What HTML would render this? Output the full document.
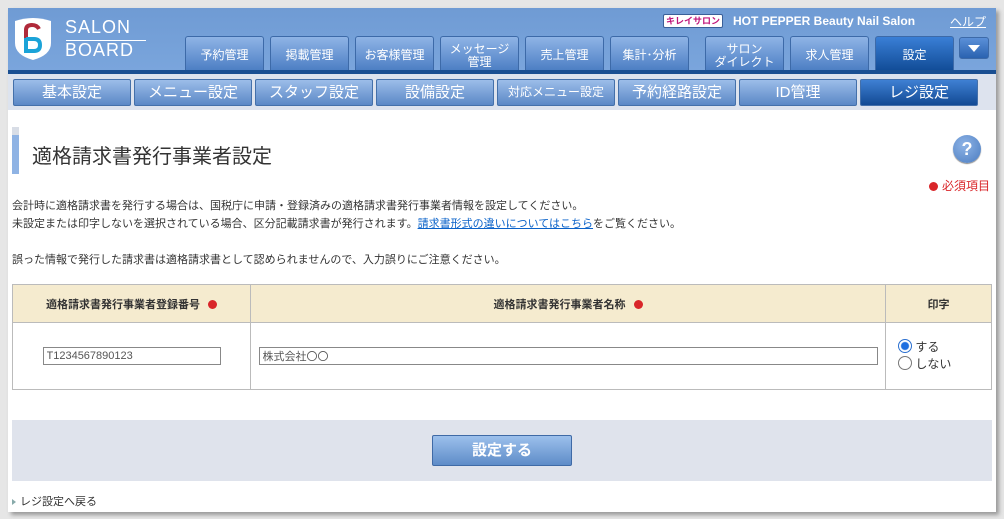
<!DOCTYPE html>
<html><head><meta charset="utf-8"><style>
*{box-sizing:border-box;margin:0;padding:0}
body{width:1004px;height:519px;background:#e6e6e6;font-family:"Liberation Sans","Noto Sans CJK JP",sans-serif;position:relative;overflow:hidden}
#win{position:absolute;left:8px;top:8px;width:988px;height:504px;background:#fff;box-shadow:3px 3px 4px #999}
#hdr{position:absolute;left:0;top:0;width:988px;height:62px;background:linear-gradient(#6f9bd4,#7aa5dc)}
#line{position:absolute;left:0;top:62px;width:988px;height:4px;background:#1a4f92}
#sub{position:absolute;left:0;top:66px;width:988px;height:36px;background:#dde3ee}
.tab{position:absolute;top:28px;height:34px;width:79px;border:1px solid #3d6aa8;border-bottom:none;border-radius:3px 3px 0 0;background:linear-gradient(#8fb4e6,#4d7fc4);color:#fff;font-size:12px;text-align:center;line-height:13px;display:flex;align-items:center;justify-content:center;padding-top:4px}
.tab.act{background:linear-gradient(#3a7fd6,#124d98)}
.sb{position:absolute;top:5px;height:27px;width:118px;border:1px solid #4470aa;border-radius:2px;background:linear-gradient(#9cbde9,#5b88c6);color:#fff;font-size:15px;text-align:center;line-height:25px}
.sb.act{background:linear-gradient(#3f80d3,#124a94)}
p.t{position:absolute;left:4px;font-size:11px;color:#333;white-space:nowrap}
table{position:absolute;left:4px;top:276px;width:980px;border-collapse:collapse}
td,th{border:1px solid #bbb;font-size:11px;color:#333}
th{background:#f5ebcf;height:38px}
.dot{display:inline-block;width:9px;height:9px;border-radius:50%;background:#d9262a;margin-left:8px;vertical-align:-1px}
input{font-family:inherit;font-size:11px;color:#555;border:1px solid #888;height:18px;padding:0 3px}
</style></head><body>
<div id="win">
<div id="hdr">
 <svg style="position:absolute;left:4px;top:9px" width="42" height="44" viewBox="0 0 42 44"><path d="M3 4 Q21 -2 39 4 L39 26 Q39 38 21 43 Q3 38 3 26Z" fill="#fff"/><path d="M27 12 Q25 8 20 8 Q14 8 14 13 L14 21" stroke="#b02a3a" stroke-width="4" fill="none"/><path d="M14 21 L14 34 L22 34 Q28 34 28 28 Q28 22 22 22 L14 22" stroke="#1ba3d8" stroke-width="4" fill="none"/></svg>
 <div style="position:absolute;left:57px;top:10px;color:#fff;font-size:18px;letter-spacing:1px;line-height:19px">SALON</div>
 <div style="position:absolute;left:58px;top:32px;width:80px;height:1px;background:#fff"></div>
 <div style="position:absolute;left:57px;top:33px;color:#fff;font-size:18px;letter-spacing:1px;line-height:19px">BOARD</div>
 <div style="position:absolute;left:655px;top:6px;width:60px;height:14px;background:#fff;border:1px solid #3a5f98;border-radius:2px;color:#c0157a;font-size:9px;font-weight:bold;text-align:center;line-height:12px">キレイサロン</div>
 <div style="position:absolute;left:725px;top:6px;color:#fff;font-size:12px;font-weight:bold">HOT PEPPER Beauty Nail Salon</div>
 <div style="position:absolute;left:942px;top:5px;color:#fff;font-size:12px;text-decoration:underline">ヘルプ</div>
 <div class="tab" style="left:177px">予約管理</div>
 <div class="tab" style="left:262px">掲載管理</div>
 <div class="tab" style="left:347px">お客様管理</div>
 <div class="tab" style="left:432px">メッセージ<br>管理</div>
 <div class="tab" style="left:517px">売上管理</div>
 <div class="tab" style="left:602px">集計･分析</div>
 <div class="tab" style="left:697px">サロン<br>ダイレクト</div>
 <div class="tab" style="left:782px">求人管理</div>
 <div class="tab act" style="left:867px">設定</div>
 <div style="position:absolute;left:951px;top:29px;width:30px;height:22px;border:1px solid #3d6aa8;border-radius:3px;background:linear-gradient(#5b90d8,#2a62b0)"><div style="margin:7px auto 0;width:0;height:0;border-left:6px solid transparent;border-right:6px solid transparent;border-top:7px solid #fff"></div></div>
</div>
<div id="line"></div>
<div id="sub">
 <div class="sb" style="left:5px">基本設定</div>
 <div class="sb" style="left:126px">メニュー設定</div>
 <div class="sb" style="left:247px">スタッフ設定</div>
 <div class="sb" style="left:368px">設備設定</div>
 <div class="sb" style="left:489px;font-size:12px">対応メニュー設定</div>
 <div class="sb" style="left:610px">予約経路設定</div>
 <div class="sb" style="left:731px">ID管理</div>
 <div class="sb act" style="left:852px">レジ設定</div>
</div>
<div style="position:absolute;left:4px;top:119px;width:7px;height:8px;background:#d8dde6"></div>
<div style="position:absolute;left:4px;top:127px;width:7px;height:39px;background:#8fb3e4"></div>
<div style="position:absolute;left:24px;top:132px;font-size:20px;color:#333">適格請求書発行事業者設定</div>
<div style="position:absolute;left:945px;top:127px;width:28px;height:28px;border-radius:50%;background:radial-gradient(circle at 40% 35%,#8db3e6,#4b7cc0);color:#fff;font-weight:bold;font-size:18px;text-align:center;line-height:28px;box-shadow:0 1px 1px #888">?</div>
<div style="position:absolute;left:921px;top:169px;font-size:12px;color:#d9262a"><span class="dot" style="margin:0 4px 0 0"></span>必須項目</div>
<p class="t" style="top:189px">会計時に適格請求書を発行する場合は、国税庁に申請・登録済みの適格請求書発行事業者情報を設定してください。</p>
<p class="t" style="top:207px">未設定または印字しないを選択されている場合、区分記載請求書が発行されます。<span style="color:#0a62c9;text-decoration:underline">請求書形式の違いについてはこちら</span>をご覧ください。</p>
<p class="t" style="top:243px">誤った情報で発行した請求書は適格請求書として認められませんので、入力誤りにご注意ください。</p>
<table>
<tr><th style="width:238px">適格請求書発行事業者登録番号<span class="dot"></span></th><th>適格請求書発行事業者名称<span class="dot"></span></th><th style="width:106px">印字</th></tr>
<tr style="height:67px"><td style="text-align:center"><input style="width:178px" value="T1234567890123"></td><td style="text-align:center"><input style="width:619px" value="株式会社〇〇"></td>
<td style="padding-left:12px;font-size:12px;line-height:17px"><div><span style="display:inline-block;width:14px;height:14px;border-radius:50%;border:1px solid #2a6fd0;vertical-align:-2px;background:radial-gradient(#1e6fe0 3.5px,#fff 4.5px)"></span> する</div><div><span style="display:inline-block;width:14px;height:14px;border-radius:50%;border:1px solid #777;vertical-align:-2px"></span> しない</div></td></tr>
</table>
<div style="position:absolute;left:4px;top:412px;width:980px;height:61px;background:#dfe3ec"></div>
<div style="position:absolute;left:424px;top:427px;width:140px;height:31px;border:1px solid #3f6aa6;border-radius:2px;background:linear-gradient(#9cc0ec,#5e8cc8);color:#fff;font-size:15px;font-weight:bold;text-align:center;line-height:29px">設定する</div>
<div style="position:absolute;left:4px;top:485px;font-size:11px;color:#333"><span style="display:inline-block;width:0;height:0;border-top:3px solid transparent;border-bottom:3px solid transparent;border-left:4px solid #8aa;margin-right:4px"></span>レジ設定へ戻る</div>
</div>
</body></html>
